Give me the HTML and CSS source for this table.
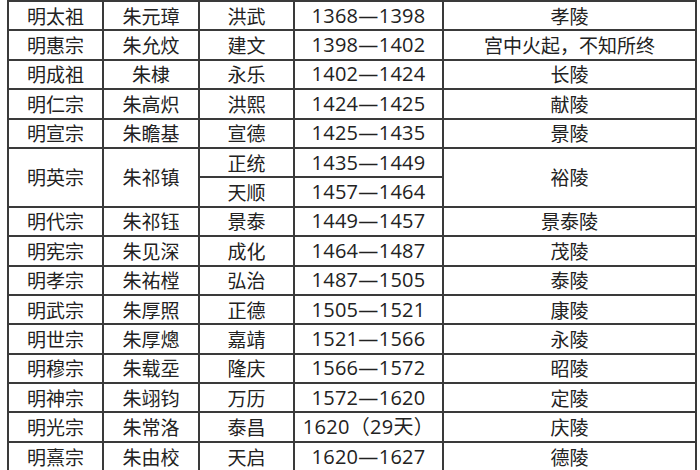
FILE: index.html
```html
<!DOCTYPE html>
<html lang="zh-CN">
<head>
<meta charset="utf-8">
<link rel="stylesheet" href="styles.css">
</head>
<body>
<table class="ming">
<colgroup>
<col class="c1"><col class="c2"><col class="c3"><col class="c4"><col class="c5">
</colgroup>
<tbody>
<tr><td>明太祖</td><td>朱元璋</td><td>洪武</td><td class="yr">1368—1398</td><td>孝陵</td></tr>
<tr><td>明惠宗</td><td>朱允炆</td><td>建文</td><td class="yr">1398—1402</td><td>宫中火起，不知所终</td></tr>
<tr><td>明成祖</td><td>朱棣</td><td>永乐</td><td class="yr">1402—1424</td><td>长陵</td></tr>
<tr><td>明仁宗</td><td>朱高炽</td><td>洪熙</td><td class="yr">1424—1425</td><td>献陵</td></tr>
<tr><td>明宣宗</td><td>朱瞻基</td><td>宣德</td><td class="yr">1425—1435</td><td>景陵</td></tr>
<tr><td rowspan="2">明英宗</td><td rowspan="2">朱祁镇</td><td>正统</td><td class="yr">1435—1449</td><td rowspan="2">裕陵</td></tr>
<tr><td>天顺</td><td class="yr">1457—1464</td></tr>
<tr><td>明代宗</td><td>朱祁钰</td><td>景泰</td><td class="yr">1449—1457</td><td>景泰陵</td></tr>
<tr><td>明宪宗</td><td>朱见深</td><td>成化</td><td class="yr">1464—1487</td><td>茂陵</td></tr>
<tr><td>明孝宗</td><td>朱祐樘</td><td>弘治</td><td class="yr">1487—1505</td><td>泰陵</td></tr>
<tr><td>明武宗</td><td>朱厚照</td><td>正德</td><td class="yr">1505—1521</td><td>康陵</td></tr>
<tr><td>明世宗</td><td>朱厚熜</td><td>嘉靖</td><td class="yr">1521—1566</td><td>永陵</td></tr>
<tr><td>明穆宗</td><td>朱载坖</td><td>隆庆</td><td class="yr">1566—1572</td><td>昭陵</td></tr>
<tr><td>明神宗</td><td>朱翊钧</td><td>万历</td><td class="yr">1572—1620</td><td>定陵</td></tr>
<tr><td>明光宗</td><td>朱常洛</td><td>泰昌</td><td class="yr">1620（29天）</td><td>庆陵</td></tr>
<tr><td>明熹宗</td><td>朱由校</td><td>天启</td><td class="yr">1620—1627</td><td>德陵</td></tr>
</tbody>
</table>
</body>
</html>
```
FILE: styles.css
```css
html, body {
  margin: 0;
  padding: 0;
  background: #ffffff;
}
body {
  padding-left: 7px;
  font-family: "Noto Sans CJK SC", "Noto Sans", sans-serif;
  color: #222;
}
.ming {
  border-collapse: collapse;
  table-layout: fixed;
  width: 688px;
  font-size: 19px;
}
.c1 { width: 95px; }
.c2 { width: 96px; }
.c3 { width: 95px; }
.c4 { width: 149px; }
.c5 { width: 253px; }
.ming tr {
  height: 29.4px;
}
.ming td {
  border: 2px solid #3a3a3a;
  text-align: center;
  vertical-align: middle;
  padding: 0;
  line-height: 24px;
  white-space: nowrap;
  overflow: hidden;
}
.ming td.yr {
  font-family: "Open Sans", "Noto Sans CJK SC", sans-serif;
  font-size: 20px;
  letter-spacing: 0.3px;
}
```
